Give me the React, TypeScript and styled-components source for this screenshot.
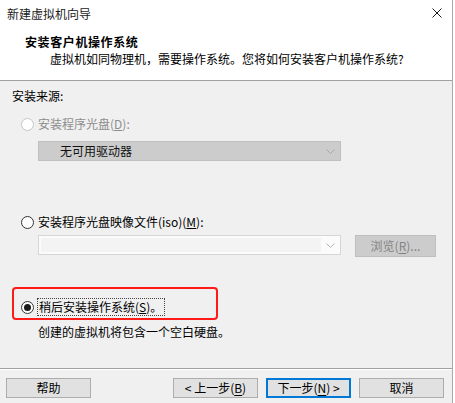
import React from 'react'
import styled, { createGlobalStyle, css } from 'styled-components'

const GlobalStyle = createGlobalStyle`
  html, body {
    margin: 0;
    padding: 0;
    background: #ffffff;
  }
  body {
    font-family: "Noto Sans CJK SC", "Noto Sans", sans-serif;
    font-size: 12px;
    line-height: 16px;
    color: #000;
  }
`

export default function App() {
  return (
    <>
      <GlobalStyle />
      <Window>
        <TitleBar>
          <Caption>新建虚拟机向导</Caption>
          <CloseButton aria-label="关闭">
            <svg width="10" height="10" viewBox="0 0 10 10">
              <path d="M0.5 0.5 L9.5 9.5 M9.5 0.5 L0.5 9.5" stroke="#1a1a1a" strokeWidth="1" fill="none" />
            </svg>
          </CloseButton>
        </TitleBar>

        <Header>
          <HeaderTitle>安装客户机操作系统</HeaderTitle>
          <HeaderText>虚拟机如同物理机，需要操作系统。您将如何安装客户机操作系统?</HeaderText>
        </Header>

        <Body>
          <SectionLabel>安装来源:</SectionLabel>

          <Option $top={12} $indent={9} $disabled>
            <Radio $disabled />
            <OptionLabel>安装程序光盘(<u>D</u>):</OptionLabel>
          </Option>

          <DriveSelect>
            <span>无可用驱动器</span>
            <Chevron color="#a8a8a8" />
          </DriveSelect>

          <Option $top={53} $indent={9}>
            <Radio />
            <OptionLabel>安装程序光盘映像文件(iso)(<u>M</u>):</OptionLabel>
          </Option>

          <FileRow>
            <FileCombo>
              <FileField />
              <ComboArrow>
                <Chevron color="#b4b4b4" />
              </ComboArrow>
            </FileCombo>
            <BrowseButton disabled>浏览(<u>R</u>)...</BrowseButton>
          </FileRow>

          <Highlight>
            <Option $top={0} $indent={7}>
              <Radio $checked />
              <OptionLabel $focused>稍后安装操作系统(<u>S</u>)。</OptionLabel>
            </Option>
          </Highlight>

          <Hint>创建的虚拟机将包含一个空白硬盘。</Hint>
        </Body>

        <Footer>
          <Button>帮助</Button>
          <Spacer />
          <ButtonGroup>
            <Button>&lt; 上一步(<u>B</u>)</Button>
            <Button $primary>下一步(<u>N</u>) &gt;</Button>
            <Button>取消</Button>
          </ButtonGroup>
        </Footer>
      </Window>
    </>
  )
}

function Chevron({ color }: { color: string }) {
  return (
    <svg width="9" height="5" viewBox="0 0 9 5">
      <path d="M0.5 0.5 L4.5 4.5 L8.5 0.5" stroke={color} strokeWidth="1" fill="none" />
    </svg>
  )
}

const Window = styled.div`
  width: 452px;
  height: 403px;
  border-right: 1px solid #a9a9a9;
  display: flex;
  flex-direction: column;
  background: #f0f0f0;
`

const TitleBar = styled.div`
  height: 27px;
  flex-shrink: 0;
  display: flex;
  align-items: center;
  padding: 0 10px 1px 7px;
  background: #ffffff;
`

const Caption = styled.div`
  flex: 1;
  color: #1a1a1a;
`

const CloseButton = styled.div`
  width: 10px;
  height: 10px;
  display: flex;
  margin-top: -2px;
`

const Header = styled.div`
  height: 53px;
  flex-shrink: 0;
  box-sizing: border-box;
  background: #ffffff;
  border-bottom: 1px solid #a0a0a0;
  padding-top: 6px;
`

const HeaderTitle = styled.div`
  padding-left: 25px;
  font-weight: 700;
  letter-spacing: 0.6px;
`

const HeaderText = styled.div`
  padding-left: 50px;
  margin-top: 1px;
`

const Body = styled.div`
  height: 287px;
  flex-shrink: 0;
  box-sizing: border-box;
  padding: 7px 12px 0 12px;
  display: flex;
  flex-direction: column;
`

const SectionLabel = styled.div`
  height: 16px;
`

const Option = styled.div<{ $top: number; $indent: number; $disabled?: boolean }>`
  margin-top: ${p => p.$top}px;
  padding-left: ${p => p.$indent}px;
  display: flex;
  align-items: center;
  color: ${p => (p.$disabled ? '#8d8d8d' : '#000')};
`

const Radio = styled.span<{ $checked?: boolean; $disabled?: boolean }>`
  width: 13px;
  height: 13px;
  box-sizing: border-box;
  border-radius: 50%;
  border: 1px solid ${p => (p.$disabled ? '#c6c6c6' : '#333333')};
  background: #ffffff;
  display: flex;
  align-items: center;
  justify-content: center;
  flex-shrink: 0;
  ${p =>
    p.$checked &&
    css`
      &::after {
        content: '';
        width: 7px;
        height: 7px;
        border-radius: 50%;
        background: #1a1a1a;
      }
    `}
`

const OptionLabel = styled.span<{ $focused?: boolean }>`
  margin-left: 3px;
  height: 16px;
  padding: 0 1px;
  ${p =>
    p.$focused &&
    css`
      outline: 1px dotted #444;
      outline-offset: 0;
      padding: 0 2px 0 1px;
      margin: 1px 0 1px 4px;
    `}
`

const DriveSelect = styled.div`
  margin: 9px 0 0 26px;
  width: 303px;
  height: 20px;
  box-sizing: border-box;
  background: #cccccc;
  border: 1px solid #c0c0c0;
  display: flex;
  align-items: center;
  justify-content: space-between;
  padding: 0 5px 0 21px;
  color: #111;
`

const FileRow = styled.div`
  margin: 5px 0 0 26px;
  display: flex;
  align-items: flex-start;
  gap: 14px;
`

const FileCombo = styled.div`
  width: 303px;
  height: 20px;
  box-sizing: border-box;
  border: 1px solid #d6d6d6;
  background: #fbfbfb;
  display: flex;
`

const FileField = styled.div`
  flex: 1;
  margin: 2px 0 2px 2px;
  background: #f3f3f3;
`

const ComboArrow = styled.div`
  width: 19px;
  display: flex;
  align-items: center;
  justify-content: center;
`

const Button = styled.button<{ $primary?: boolean }>`
  width: 85px;
  height: 20px;
  box-sizing: border-box;
  padding: 0;
  font: inherit;
  font-size: 12px;
  line-height: 16px;
  color: #000;
  background: #e1e1e1;
  border: 1px solid ${p => (p.$primary ? '#0078d7' : '#adadad')};
  border-radius: 0;
  ${p =>
    p.$primary &&
    css`
      box-shadow: inset 0 0 0 1px #0078d7;
    `}
  u {
    text-underline-offset: 2px;
  }
`

const BrowseButton = styled(Button)`
  width: 81px;
  height: 22px;
  background: #cccccc;
  border-color: #bfbfbf;
  color: #838383;
`

const Highlight = styled.div`
  margin-top: 30px;
  width: 206px;
  height: 33px;
  box-sizing: border-box;
  border: 2px solid #ff1a1a;
  border-radius: 4px;
  padding-top: 9px;
`

const Hint = styled.div`
  margin: 4px 0 0 26px;
`

const Footer = styled.div`
  flex: 1;
  border-top: 1px solid #a0a0a0;
  box-shadow: inset 0 1px 0 #ffffff;
  padding: 9px 8px 0 6px;
  display: flex;
  align-items: flex-start;
`

const Spacer = styled.div`
  flex: 1;
`

const ButtonGroup = styled.div`
  display: flex;
  gap: 8px;
`
